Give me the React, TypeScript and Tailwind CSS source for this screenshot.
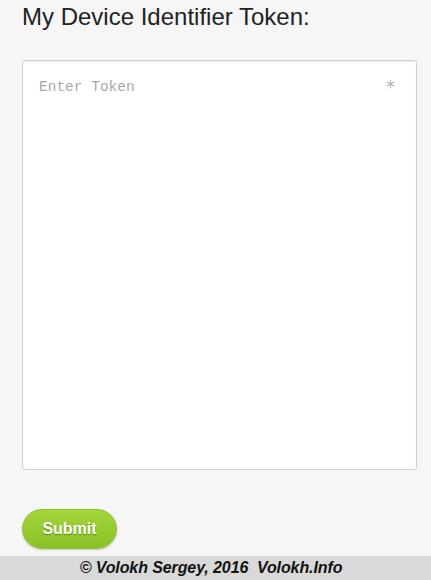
export default function App() {
  return (
    <div className="min-h-[580px] bg-[#f6f6f6] flex flex-col font-['Liberation_Sans',Arial,sans-serif]">
      <div className="pl-[22px] pr-[14px] flex-1 flex flex-col">
        <h1 className="text-[24px] leading-[28px] text-[#222] mt-[3px] font-normal">My Device Identifier Token:</h1>

        <div className="relative mt-[29px]">
          <textarea
            placeholder="Enter Token"
            className="block w-full h-[410px] resize-none bg-white border border-[#cfcfcf] rounded-[3px] pl-[16px] pr-[34px] pt-[16px] font-['Liberation_Mono','DejaVu_Sans_Mono',monospace] text-[14.5px] leading-[20px] text-[#333] placeholder:text-[#a9a9a9] outline-none shadow-[inset_0_1px_2px_rgba(0,0,0,0.06)]"
          />
          <span className="absolute right-[22px] top-[17px] text-[#b0b0b0] text-[18px] leading-[20px] font-['DejaVu_Sans',sans-serif]">*</span>
        </div>

        <div className="mt-[39px] mb-[7px]">
          <button className="h-[40px] w-[95px] rounded-full bg-gradient-to-b from-[#a4d53a] to-[#88c127] border border-[#8fc02e] text-white font-bold text-[16px] [text-shadow:0_1px_1px_rgba(0,0,0,0.35)] shadow-[0_1px_2px_rgba(0,0,0,0.2)]">
            Submit
          </button>
        </div>
      </div>

      <footer className="h-[24px] bg-[#d9d9d9] flex items-center justify-center pr-[9px]">
        <span className="font-bold italic text-[16px] text-[#111] whitespace-pre tracking-[-0.1px]">© Volokh Sergey, 2016  Volokh.Info</span>
      </footer>
    </div>
  );
}
